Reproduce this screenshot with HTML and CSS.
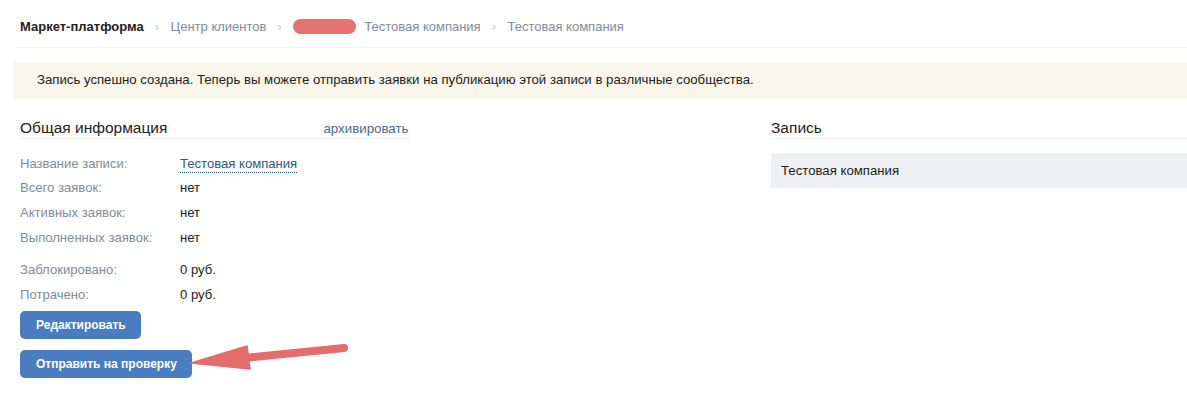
FILE: index.html
```html
<!DOCTYPE html>
<html lang="ru">
<head>
<meta charset="utf-8">
<title>Запись</title>
<link rel="stylesheet" href="styles.css">
</head>
<body>
<div class="page">
  <nav class="crumbs">
    <span class="crumb crumb-root">Маркет-платформа</span>
    <span class="sep">›</span>
    <span class="crumb">Центр клиентов</span>
    <span class="sep">›</span>
    <span class="redact"></span>
    <span class="crumb">Тестовая компания</span>
    <span class="sep">›</span>
    <span class="crumb">Тестовая компания</span>
  </nav>

  <div class="notice">Запись успешно создана. Теперь вы можете отправить заявки на публикацию этой записи в различные сообщества.</div>

  <div class="columns">
    <section class="col-left">
      <header class="col-head">
        <h2 class="col-title">Общая информация</h2>
        <a class="archive">архивировать</a>
      </header>
      <div class="rows">
        <div class="row"><span class="lbl">Название записи:</span><span class="val"><a class="dotted">Тестовая компания</a></span></div>
        <div class="row"><span class="lbl">Всего заявок:</span><span class="val">нет</span></div>
        <div class="row"><span class="lbl">Активных заявок:</span><span class="val">нет</span></div>
        <div class="row"><span class="lbl">Выполненных заявок:</span><span class="val">нет</span></div>
      </div>
      <div class="rows rows-money">
        <div class="row"><span class="lbl">Заблокировано:</span><span class="val">0 руб.</span></div>
        <div class="row"><span class="lbl">Потрачено:</span><span class="val">0 руб.</span></div>
      </div>
      <div class="buttons">
        <button class="btn">Редактировать</button>
        <div class="btn-wrap">
          <button class="btn">Отправить на проверку</button>
          <svg class="arrow" width="170" height="40" viewBox="0 0 170 40" xmlns="http://www.w3.org/2000/svg">
            <path d="M54 18 L154 8" stroke="#e46c6c" stroke-width="8" stroke-linecap="round" fill="none"/>
            <path d="M1 23 L57 6 L60 29 Z" fill="#e46c6c" stroke="#e46c6c" stroke-width="1.5" stroke-linejoin="round"/>
          </svg>
        </div>
      </div>
    </section>

    <section class="col-right">
      <header class="col-head">
        <h2 class="col-title">Запись</h2>
      </header>
      <div class="post-box">Тестовая компания</div>
    </section>
  </div>
</div>
</body>
</html>
```

FILE: styles.css
```css
* { box-sizing: border-box; }
html, body { margin: 0; padding: 0; background: #fff; }
body {
  font-family: "Liberation Sans", Arial, sans-serif;
  font-size: 13.1px;
  color: #222;
  overflow: hidden;
  width: 1187px;
  height: 395px;
}
.page { padding-left: 13px; }

.crumbs {
  margin-left: 3px;
  height: 48px;
  padding: 6px 0 0 4px;
  border-bottom: 1px solid #f0f1f3;
  display: flex;
  align-items: center;
  color: #818c99;
  font-size: 13px;
}
.crumb-root { color: #222; font-weight: bold; }
.sep { color: #c5cad1; margin: 0 11.5px 0 11px; font-size: 13px; }
.redact {
  display: inline-block;
  width: 63px;
  height: 15px;
  border-radius: 8px;
  background: #e57373;
  margin: 0 8px 0 0;
}

.notice {
  margin-top: 14px;
  height: 36px;
  background: #f9f6eb;
  border-bottom: 1px solid #efece2;
  display: flex;
  align-items: center;
  padding-left: 24px;
  color: #222;
  font-size: 13.2px;
  margin-right: -20px;
}

.columns {
  margin-top: 20px;
  margin-left: 7px;
  display: grid;
  grid-template-columns: 390px 1fr;
  column-gap: 361px;
}
.col-head {
  display: flex;
  align-items: center;
  height: 21px;
  border-bottom: 1px solid #f0f1f3;
}
.col-title {
  margin: 0;
  font-size: 15.5px;
  font-weight: normal;
  color: #222;
  line-height: 18px;
}
.archive {
  margin-left: 156px;
  color: #4a6c90;
  font-size: 13.3px;
}

.rows { margin-top: 12px; }
.row {
  display: flex;
  height: 24.6px;
  align-items: center;
}
.rows-money { margin-top: 8px; }
.lbl { width: 160px; color: #818c99; }
.val { color: #222; }
.dotted {
  color: #2a5885;
  border-bottom: 1px dotted #2a5885;
  padding-bottom: 1px;
}

.buttons {
  margin-top: 4px;
  display: flex;
  flex-direction: column;
  align-items: flex-start;
  gap: 11px;
}
.btn-wrap { position: relative; }
.btn {
  font-family: inherit;
  font-size: 12px;
  font-weight: bold;
  color: #fff;
  background: #4a7dbf;
  border: none;
  border-radius: 5px;
  height: 28px;
  padding: 0 15px 0 16px;
  cursor: pointer;
}
.arrow {
  position: absolute;
  left: 170px;
  top: -10px;
}

.post-box {
  margin-top: 14px;
  height: 35px;
  background: #eef0f4;
  display: flex;
  align-items: center;
  padding-left: 10px;
  font-size: 13.2px;
  color: #222;
}
```
